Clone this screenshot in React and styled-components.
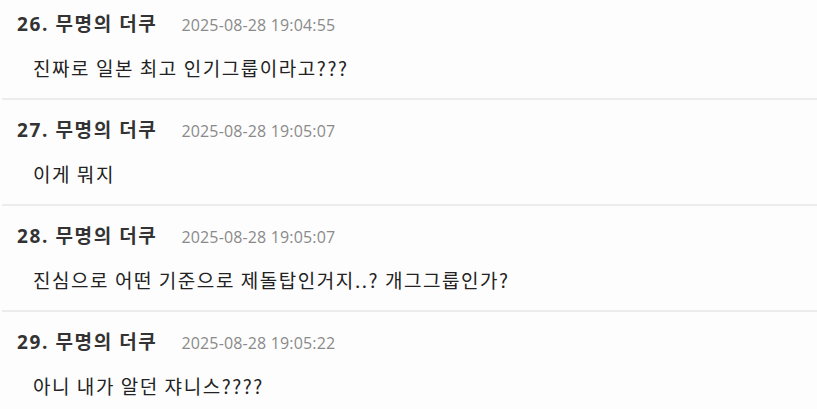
import React from "react";
import styled, { createGlobalStyle } from "styled-components";

const Global = createGlobalStyle`
  html, body { margin: 0; padding: 0; background: #fdfdfd; }
  body { font-family: "Open Sans", "Noto Sans CJK KR", sans-serif; }
`;

const List = styled.ul`
  list-style: none;
  margin: -6px 0 0 2px;
  padding: 0;
`;

const Item = styled.li`
  border-bottom: 2px solid #ececec;
  padding: 15px 0 0 15px;
  height: 89px;
`;

const Header = styled.div`
  display: flex;
  align-items: baseline;
  gap: 24px;
`;

const Name = styled.span`
  font-family: "Open Sans", "Noto Sans CJK KR", sans-serif;
  font-weight: 700;
  font-size: 19px;
  letter-spacing: 1.6px;
  color: #333;
`;

const Time = styled.span`
  font-family: "Open Sans", sans-serif;
  font-size: 16px;
  letter-spacing: 0.15px;
  color: #8a8a8a;
`;

const Body = styled.p`
  margin: 17px 0 0 16px;
  font-family: "Noto Sans CJK KR", sans-serif;
  font-size: 19px;
  letter-spacing: 1.55px;
  color: #222;
`;

const comments = [
  { no: 26, time: "2025-08-28 19:04:55", text: "진짜로 일본 최고 인기그룹이라고???" },
  { no: 27, time: "2025-08-28 19:05:07", text: "이게 뭐지" },
  { no: 28, time: "2025-08-28 19:05:07", text: "진심으로 어떤 기준으로 제돌탑인거지..? 개그그룹인가?" },
  { no: 29, time: "2025-08-28 19:05:22", text: "아니 내가 알던 쟈니스????" },
];

export default function App() {
  return (
    <>
      <Global />
      <List>
        {comments.map((c) => (
          <Item key={c.no}>
            <Header>
              <Name>{c.no}. 무명의 더쿠</Name>
              <Time>{c.time}</Time>
            </Header>
            <Body>{c.text}</Body>
          </Item>
        ))}
      </List>
    </>
  );
}
